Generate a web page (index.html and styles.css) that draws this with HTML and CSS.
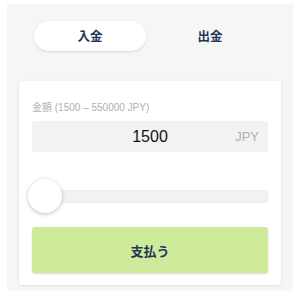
FILE: index.html
```html
<!DOCTYPE html>
<html lang="ja">
<head>
    <meta charset="UTF-8">
    <meta name="viewport" content="width=device-width, initial-scale=1.0">
    <title>入金</title>
    <link rel="stylesheet" href="styles.css">
</head>
<body>
    <div class="panel">
        <div class="tabs">
            <div class="tab active">入金</div>
            <div class="tab">出金</div>
        </div>

        <form class="card">
            <label class="label" for="amount">金額 (1500 – 550000 JPY)</label>
            <div class="amount">
                <input type="text" id="amount" value="1500">
                <span class="currency">JPY</span>
            </div>
            <div class="slider">
                <div class="track"></div>
                <div class="thumb"></div>
            </div>
            <button type="submit" class="pay">支払う</button>
        </form>
    </div>
</body>
</html>
```

FILE: styles.css
```css
body {
    margin: 0;
    padding: 0;
    background: #ffffff;
    font-family: "Liberation Sans", "Noto Sans CJK JP", sans-serif;
}

.panel {
    margin: 4px 7px 0;
    height: 287px;
    padding-top: 17px;
    box-sizing: border-box;
    background: #f6f6f6;
}

.tabs {
    display: grid;
    grid-template-columns: 120px 120px;
    padding: 0 23px;
}

.tab {
    margin: 0 4px;
    height: 30px;
    line-height: 30px;
    text-align: center;
    font-family: "Noto Sans CJK JP", sans-serif;
    font-weight: 700;
    font-size: 12.5px;
    color: #1d3654;
    border-radius: 15px;
}

    .tab.active {
        background: #ffffff;
        box-shadow: 0 1px 3px rgba(0, 0, 0, 0.12);
    }

.card {
    margin: 30px 12px 0;
    padding: 20px 13px 12px;
    background: #ffffff;
    border-radius: 3px;
    box-shadow: 0 1px 3px rgba(0, 0, 0, 0.10);
    display: flex;
    flex-direction: column;
}

.label {
    font-size: 10px;
    line-height: 14px;
    color: #b0b0b0;
    font-family: "Liberation Sans", "Noto Sans CJK JP", sans-serif;
}

.amount {
    margin-top: 6px;
    height: 31px;
    background: #f2f2f2;
    border-radius: 3px;
    display: flex;
    align-items: center;
    position: relative;
}

    .amount input {
        width: 100%;
        border: none;
        background: transparent;
        text-align: center;
        font-family: "Liberation Sans", sans-serif;
        font-size: 16px;
        color: #111111;
        padding: 0;
        outline: none;
    }

.currency {
    position: absolute;
    right: 9px;
    font-size: 13px;
    color: #b0b0b0;
}

.slider {
    position: relative;
    margin-top: 38px;
    height: 13px;
}

.track {
    height: 13px;
    background: #f2f2f2;
    border-radius: 4px;
    box-shadow: inset 0 0 0 1px #ececec;
}

.thumb {
    position: absolute;
    left: -4px;
    top: -11px;
    width: 34px;
    height: 34px;
    border-radius: 50%;
    background: #ffffff;
    box-shadow: 0 1px 4px rgba(0, 0, 0, 0.25);
}

.pay {
    margin-top: 24px;
    height: 46px;
    border: none;
    border-radius: 3px;
    background: #d0ea9b;
    box-shadow: 0 1px 2px rgba(0, 0, 0, 0.15);
    font-family: "Noto Sans CJK JP", sans-serif;
    font-weight: 700;
    font-size: 13px;
    color: #1d3654;
    cursor: pointer;
}
```
